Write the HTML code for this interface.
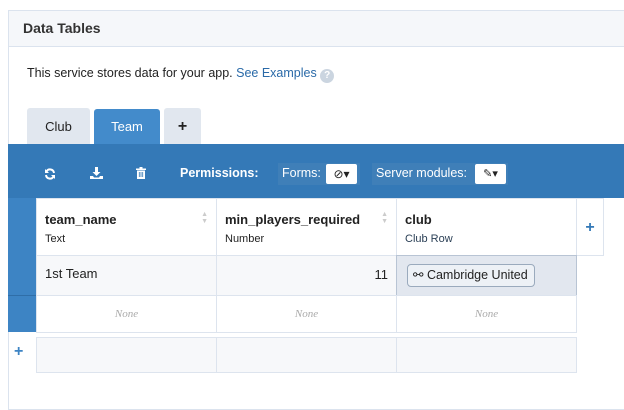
<!DOCTYPE html><html><head><style>
body{margin:0;width:624px;height:401px;background:#fff;font-family:"Liberation Sans",sans-serif;overflow:hidden;position:relative;font-size:13px;color:#222}
.a{position:absolute}
.cell{position:absolute;border:1px solid #dde4ee;box-sizing:border-box}
.h b{position:absolute;left:8px;top:13px;font-size:13px}
.h span{position:absolute;left:8px;top:34px;font-size:11px}
.none{font-family:"Liberation Serif",serif;font-style:italic;color:#aaa;font-size:11px;text-align:center;line-height:36px}
.sort{position:absolute;right:8px;top:12px;color:#ccc;font-size:7px;line-height:7px}
</style></head><body>
<div class="a" style="left:8px;top:10px;width:620px;height:400px;border:1px solid #dbe3ee;box-sizing:border-box"></div>
<div class="a" style="left:9px;top:11px;width:615px;height:35px;background:#f5f7fa;border-bottom:1px solid #dbe3ee"></div>
<div class="a" style="left:23px;top:20px;font-weight:bold;font-size:14px;color:#333">Data Tables</div>
<div class="a" style="left:27px;top:66px;font-size:12.5px">This service stores data for your app. <span style="color:#2a6aa8">See Examples</span> <span style="display:inline-block;width:14px;height:14px;border-radius:50%;background:#cbd5e0;color:#fff;font-size:10px;text-align:center;line-height:14px;font-weight:bold;vertical-align:-1px">?</span></div>
<div class="a" style="left:27px;top:108px;width:63px;height:36px;background:#e1e7ef;border-radius:3px 3px 0 0;text-align:center;line-height:38px">Club</div>
<div class="a" style="left:94px;top:109px;width:66px;height:35px;background:#438bcb;color:#fff;border-radius:3px 3px 0 0;text-align:center;line-height:36px">Team</div>
<div class="a" style="left:164px;top:108px;width:37px;height:36px;background:#e1e7ef;border-radius:3px 3px 0 0;text-align:center;line-height:38px;font-weight:bold;font-size:16px">+</div>
<div class="a" style="left:8px;top:144px;width:616px;height:54px;background:#3479b7"></div>
<div class="a" style="left:8px;top:198px;width:28px;height:134px;background:#3d84c4"></div>
<div class="a" style="left:8px;top:295px;width:28px;height:1px;background:#2f6ea8"></div>
<svg class="a" style="left:44px;top:168px" width="12" height="12" viewBox="0 0 12 12"><path d="M10 5A4 4 0 0 0 2.5 3.5M2 7A4 4 0 0 0 9.5 8.5" stroke="#fff" stroke-width="2" fill="none"/><path d="M1 1v4h4zM11 11V7H7z" fill="#fff"/></svg>
<svg class="a" style="left:90px;top:167px" width="13" height="12" viewBox="0 0 13 12"><path d="M5 0h3v5h2.5L6.5 9 2.5 5H5z" fill="#fff"/><path d="M0 9h3l1 1.5h5L10 9h3v3H0z" fill="#fff"/></svg>
<svg class="a" style="left:136px;top:167px" width="10" height="12" viewBox="0 0 10 12"><path d="M0 1.5h10v1.5H0zM3.5 0h3v1.5h-3zM1 3.5h8V12H1z" fill="#fff"/><path d="M3.3 5v5M5 5v5M6.7 5v5" stroke="#3479b7" stroke-width=".8"/></svg>
<div class="a" style="left:180px;top:166px;color:#fff;font-weight:bold;font-size:12.5px">Permissions:</div>
<div class="a" style="left:278px;top:163px;width:82px;height:22px;background:#3f7fb8"></div>
<div class="a" style="left:282px;top:166px;color:#fff;font-size:12.5px">Forms:</div>
<div class="a" style="left:326px;top:164px;width:31px;height:20px;background:#fff;border-radius:2px;font-size:12px;line-height:20px;text-align:center">⊘▾</div>
<div class="a" style="left:372px;top:163px;width:136px;height:22px;background:#3f7fb8"></div>
<div class="a" style="left:376px;top:166px;color:#fff;font-size:12.5px">Server modules:</div>
<div class="a" style="left:475px;top:164px;width:31px;height:20px;background:#fff;border-radius:2px;font-size:11px;line-height:20px;text-align:center">✎▾</div>
<div class="cell h" style="left:36px;top:198px;width:181px;height:58px;background:#fff"><b>team_name</b><span>Text</span><div class="sort">▲<br>▼</div></div>
<div class="cell h" style="left:216px;top:198px;width:181px;height:58px;background:#fff"><b>min_players_required</b><span>Number</span><div class="sort">▲<br>▼</div></div>
<div class="cell h" style="left:396px;top:198px;width:181px;height:58px;background:#fff"><b>club</b><span style="color:#2a3f55">Club Row</span></div>
<div class="cell" style="left:576px;top:198px;width:28px;height:58px;background:#fff;color:#3479b7;font-weight:bold;font-size:16px;text-align:center;line-height:58px">+</div>
<div class="cell" style="left:36px;top:255px;width:181px;height:41px;background:#f7f8fa;padding:10px 8px">1st Team</div>
<div class="cell" style="left:216px;top:255px;width:181px;height:41px;background:#f7f8fa;padding:11px 8px;text-align:right">11</div>
<div class="cell" style="left:396px;top:255px;width:181px;height:41px;background:#e2e7ef;border-color:#b8c4d4"><div class="a" style="left:10px;top:8px;width:128px;height:23px;border:1px solid #9aaabd;border-radius:4px;background:#edf1f6;box-sizing:border-box;line-height:21px;padding-left:5px;font-size:12.5px">⚯ Cambridge United</div></div>
<div class="cell none" style="left:36px;top:295px;width:181px;height:38px">None</div>
<div class="cell none" style="left:216px;top:295px;width:181px;height:38px">None</div>
<div class="cell none" style="left:396px;top:295px;width:181px;height:38px">None</div>
<div class="a" style="left:14px;top:343px;color:#3d84c4;font-weight:bold;font-size:16px">+</div>
<div class="cell" style="left:36px;top:337px;width:181px;height:36px;background:#f7f8fa"></div>
<div class="cell" style="left:216px;top:337px;width:181px;height:36px;background:#f7f8fa"></div>
<div class="cell" style="left:396px;top:337px;width:181px;height:36px;background:#f7f8fa"></div>
</body></html>
